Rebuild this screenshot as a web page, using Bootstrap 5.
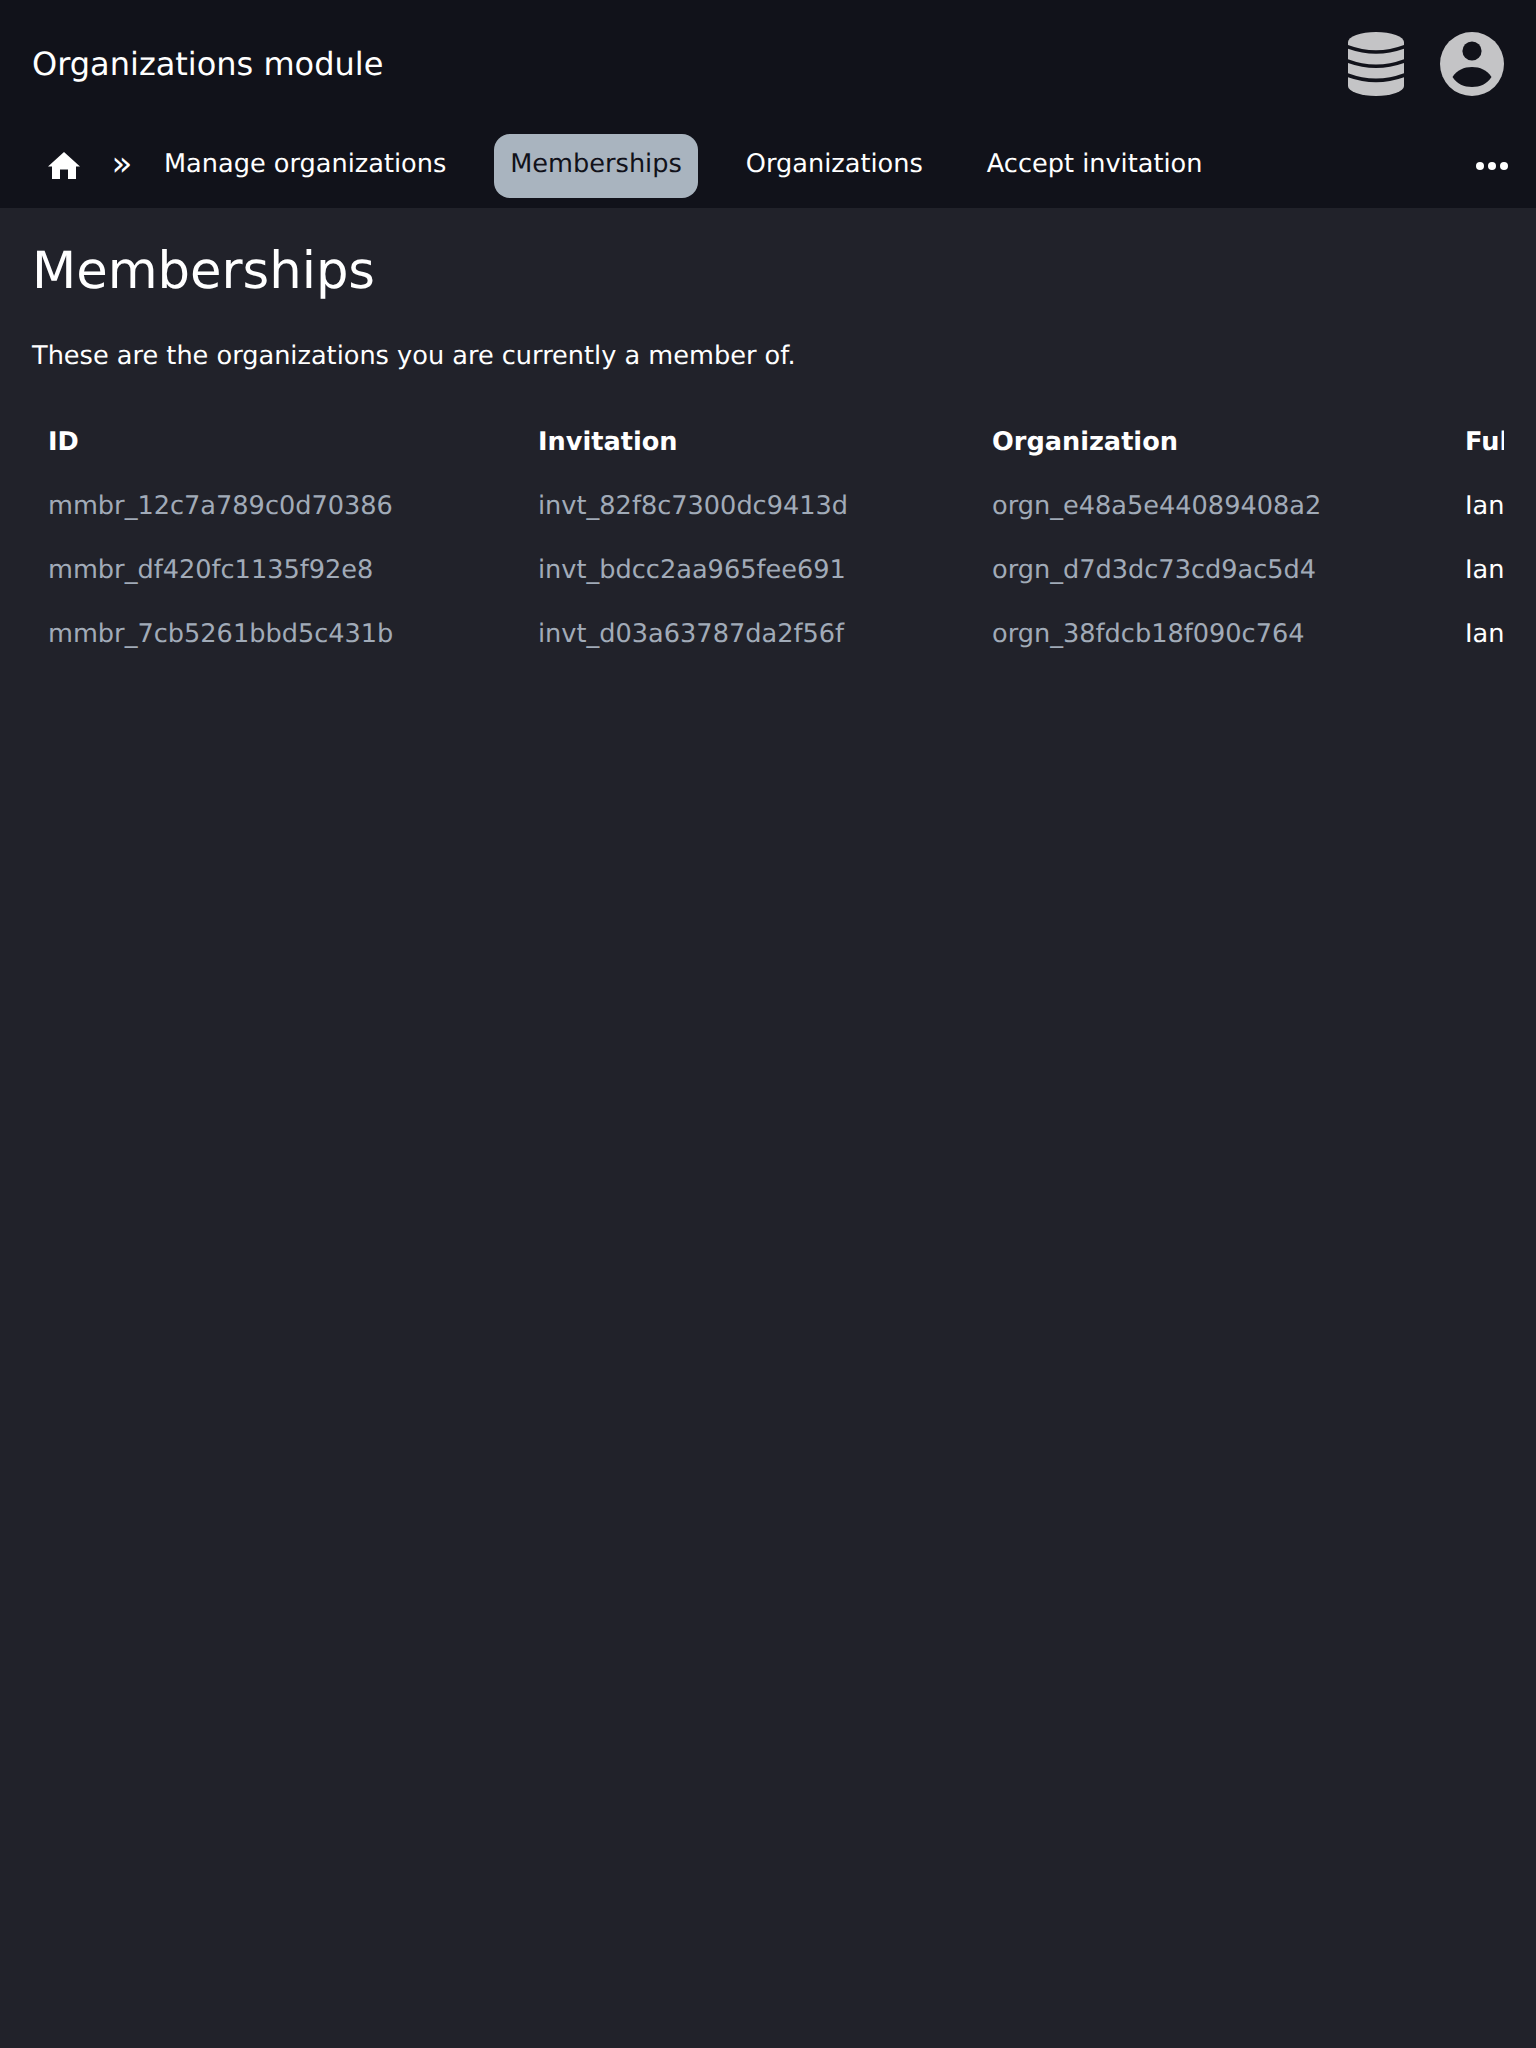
<!doctype html>
<html lang="en">
<head>
<meta charset="utf-8">
<title>Memberships</title>
<link href="https://cdn.jsdelivr.net/npm/bootstrap@5.3.0/dist/css/bootstrap.min.css" rel="stylesheet">
<style>
html, body { height: 100%; }
body { background: #21222a; color: #fff; font-family: "DejaVu Sans", sans-serif; font-size: 25.6px; line-height: 32px; min-height: 2048px; text-rendering: geometricPrecision; }
.app-head { background: #11121a; height: 208px; }
.top-row { height: 124px; padding: 32px 32px 28px; }
.app-title { font-size: 32px; line-height: 62px; color: #fff; }
.tool-icons { gap: 36px; }
.nav-row { height: 84px; padding: 10px 28px 10px 32px; }
.home-link { width: 64px; height: 64px; }
.crumb-sep { width: 52px; height: 64px; line-height: 60px; font-size: 34px; color: #fff; }
.nav-items { gap: 32px; }
.nav-entry { height: 64px; padding: 0 16px; line-height: 61px; color: #fff; text-decoration: none; border-radius: 16px; white-space: nowrap; }
.nav-entry.is-current { background: #a9b4bf; color: #11121a; }
.page-body { padding: 33px 32px 0; }
.page-title { font-size: 51.2px; line-height: 60px; font-weight: 400; margin: 0 0 39px; }
.page-intro { line-height: 32px; margin: 0 0 38px; }
.table-clip { overflow: hidden; }
.member-table { table-layout: fixed; width: 1800px; border-collapse: collapse; margin: 0; }
.member-table th, .member-table td { padding: 16px; line-height: 32px; white-space: nowrap; overflow: hidden; border: 0; background: transparent; color: #fff; }
.member-table td.id-cell { color: #a1abb8; }
.col-a { width: 490px; } .col-b { width: 454px; } .col-c { width: 473px; } .col-d { width: 383px; }
</style>
</head>
<body>
<header class="app-head">
  <div class="top-row d-flex align-items-center justify-content-between">
    <div class="app-title">Organizations module</div>
    <div class="tool-icons d-flex align-items-center">
      <svg width="56" height="64" viewBox="0 0 56 64" aria-label="Database">
        <path fill="#c4c4c6" d="M0 10 A28 10 0 0 1 56 10 V54 A28 10 0 0 1 0 54Z"/>
        <g fill="none" stroke="#11121a" stroke-width="3.600">
          <path d="M-1 14.500 Q28 25.500 57 14.500"/>
          <path d="M-1 28.700 Q28 39.700 57 28.700"/>
          <path d="M-1 42.900 Q28 53.900 57 42.900"/>
        </g>
      </svg>
      <svg width="64" height="64" viewBox="0 0 64 64" aria-label="Account">
        <circle cx="32" cy="32" r="32" fill="#c4c4c6"/>
        <circle cx="32" cy="19" r="9.600" fill="#11121a"/>
        <path fill="#11121a" d="M12.500 45 C17 38 24 35 32 35 C40 35 47 38 51.500 45 C47 52 40 55 32 55 C24 55 17 52 12.500 45Z"/>
      </svg>
    </div>
  </div>
  <nav class="nav-row d-flex align-items-center">
    <a class="home-link d-flex align-items-center justify-content-center" href="#" aria-label="Home">
      <svg width="32" height="28" viewBox="0 0 32 28"><path fill="#fff" d="M16 0 L32 14.500 H28 V27 H20 V17.500 H12 V27 H4 V14.500 H0Z"/></svg>
    </a>
    <span class="crumb-sep d-flex justify-content-center">»</span>
    <div class="nav-items d-flex flex-grow-1">
      <a class="nav-entry" href="#">Manage organizations</a>
      <a class="nav-entry is-current" href="#">Memberships</a>
      <a class="nav-entry" href="#">Organizations</a>
      <a class="nav-entry" href="#">Accept invitation</a>
    </div>
    <svg width="32" height="8" viewBox="0 0 32 8" aria-label="More"><circle cx="4" cy="4" r="4" fill="#fff"/><circle cx="16" cy="4" r="4" fill="#fff"/><circle cx="28" cy="4" r="4" fill="#fff"/></svg>
  </nav>
</header>
<main class="page-body">
  <h1 class="page-title">Memberships</h1>
  <p class="page-intro">These are the organizations you are currently a member of.</p>
  <div class="table-clip">
    <table class="table member-table">
      <colgroup><col class="col-a"><col class="col-b"><col class="col-c"><col class="col-d"></colgroup>
      <thead><tr><th>ID</th><th>Invitation</th><th>Organization</th><th>Full name</th></tr></thead>
      <tbody>
        <tr><td class="id-cell">mmbr_12c7a789c0d70386</td><td class="id-cell">invt_82f8c7300dc9413d</td><td class="id-cell">orgn_e48a5e44089408a2</td><td>Ian</td></tr>
        <tr><td class="id-cell">mmbr_df420fc1135f92e8</td><td class="id-cell">invt_bdcc2aa965fee691</td><td class="id-cell">orgn_d7d3dc73cd9ac5d4</td><td>Ian</td></tr>
        <tr><td class="id-cell">mmbr_7cb5261bbd5c431b</td><td class="id-cell">invt_d03a63787da2f56f</td><td class="id-cell">orgn_38fdcb18f090c764</td><td>Ian</td></tr>
      </tbody>
    </table>
  </div>
</main>
<script src="https://cdn.jsdelivr.net/npm/bootstrap@5.3.0/dist/js/bootstrap.bundle.min.js"></script>
</body>
</html>
